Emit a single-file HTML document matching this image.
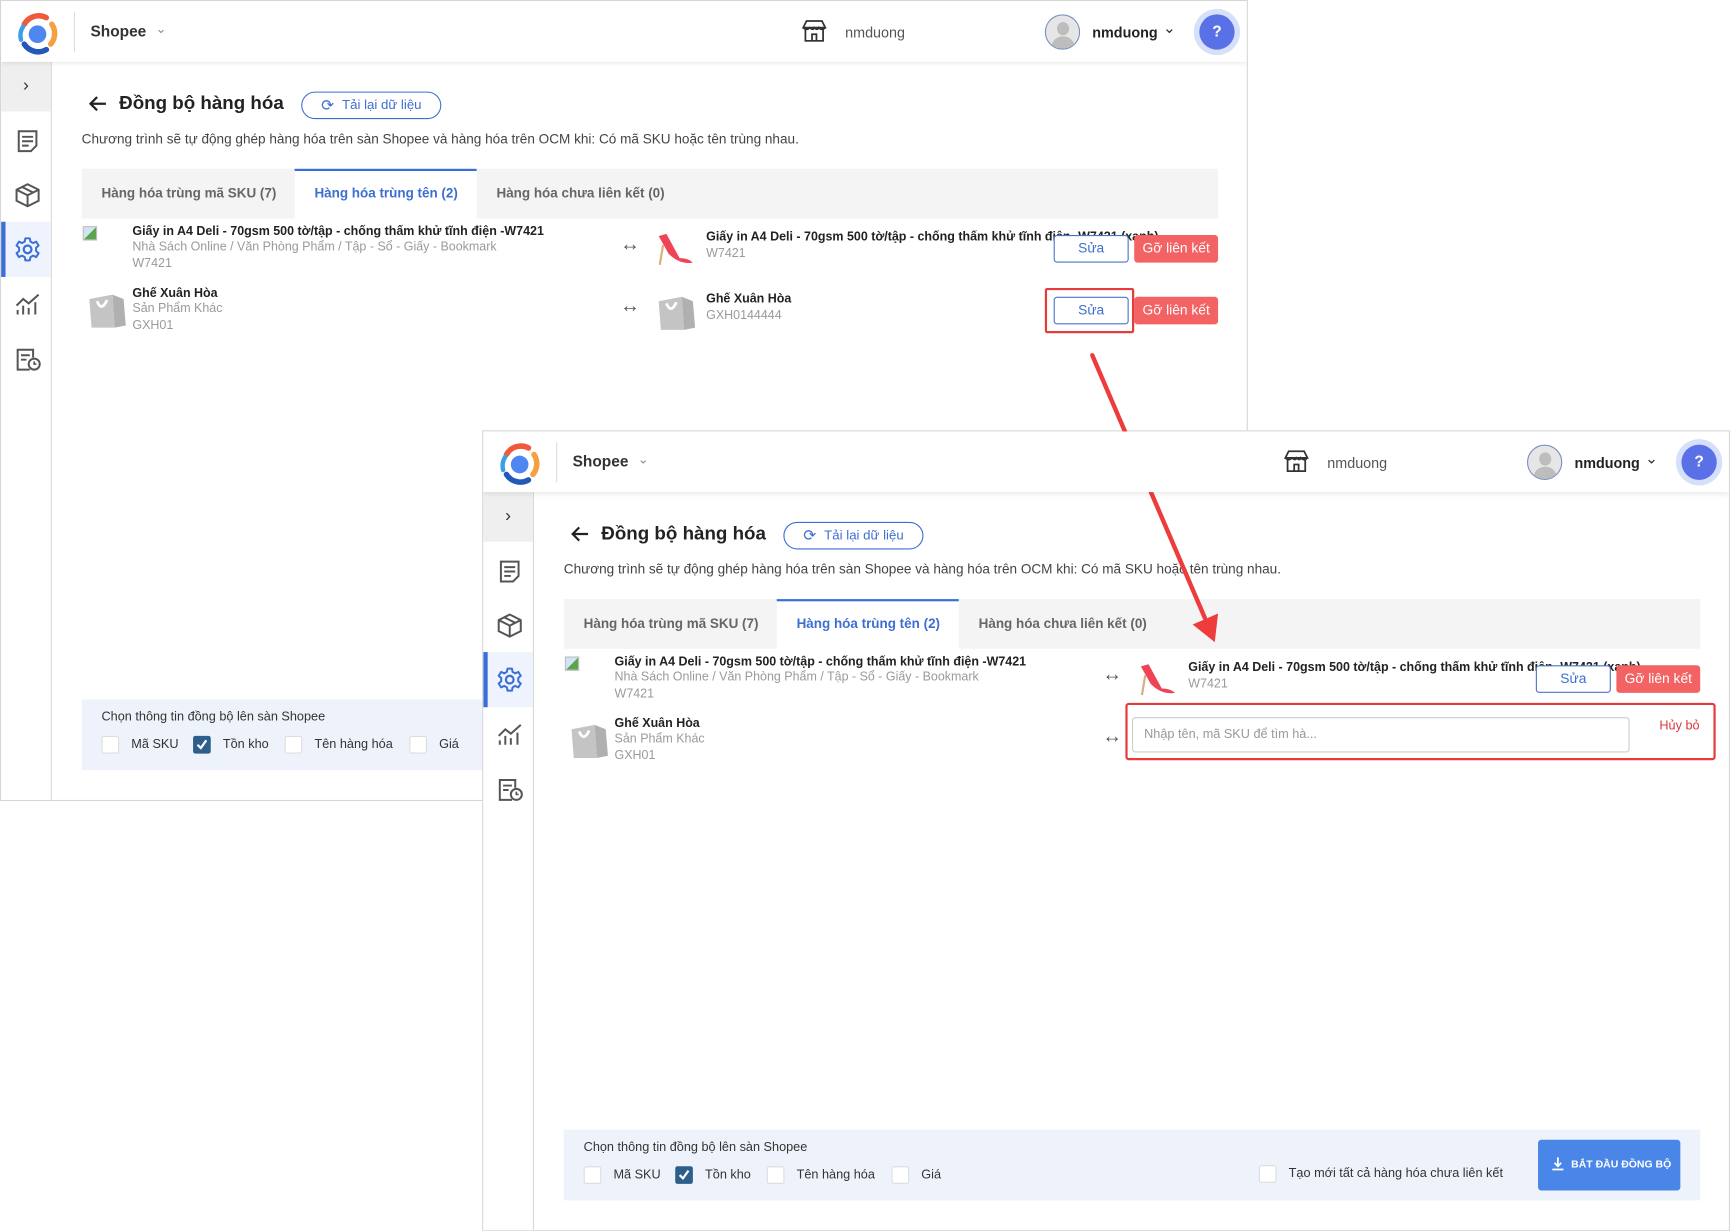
<!DOCTYPE html>
<html><head><meta charset="utf-8">
<style>
*{box-sizing:border-box;margin:0;padding:0}
html,body{width:1730px;height:1231px;overflow:hidden;background:#fff;font-family:"Liberation Sans",Arial,sans-serif;color:#333}
#sc{position:absolute;left:0;top:0;width:1568px;height:1116px;transform:scale(1.10332);transform-origin:0 0}
.win{position:absolute;width:1131px;height:726px;background:#fff;border:1px solid #d6d6d6;overflow:hidden}
.a{position:absolute;white-space:nowrap}
.hdr{position:absolute;left:0;top:0;width:100%;height:55px;background:#fff;box-shadow:0 2px 4px rgba(0,0,0,.08);z-index:2}
.side{position:absolute;left:0;top:55px;width:46px;bottom:0;background:#fff;border-right:1px solid #d8d8d8}
.b{font-weight:bold}
.t12{font-size:11.3px}
.g{color:#9a9a9a}
.btnS{position:absolute;width:68px;height:25px;border:1px solid #4a73c9;border-radius:3px;color:#3d6fd1;font-size:12.5px;text-align:center;line-height:23px;background:#fff}
.btnG{position:absolute;width:76px;height:25px;background:#f36363;border-radius:3px;color:#fff;font-size:12.5px;text-align:center;line-height:25px}
.cb{position:absolute;width:16px;height:16px;border:1px solid #ddd;background:#fff;border-radius:2px}
.cbc{background:#2d5f8a;border-color:#2d5f8a}
.bar{position:absolute;left:73px;top:633px;width:1030px;height:64px;background:#eef3fb}
.bar .l{font-size:11.5px}
.tabs{position:absolute;left:73px;top:152px;width:1030px;height:45px;background:#f4f4f4}
.tab{position:absolute;top:0;height:45px;line-height:45px;font-size:12.2px;font-weight:bold;color:#666}
</style></head><body><div id="sc">

<!-- WINDOW 1 -->
<div class="win" style="left:0;top:0;width:1131px;height:726px">
 <div class="hdr">
  <svg class="a" style="left:13px;top:9px" width="40" height="40" viewBox="0 0 40 40"><circle cx="20" cy="21" r="8" fill="#4f86f0"/><path d="M8 12 A15 15 0 0 1 28 6" stroke="#f05a3a" stroke-width="5" fill="none" stroke-linecap="round"/><path d="M33 12 A15 15 0 0 1 32 30" stroke="#f5a040" stroke-width="5" fill="none" stroke-linecap="round"/><path d="M28 35 A15 15 0 0 1 8 30" stroke="#2258b8" stroke-width="5" fill="none" stroke-linecap="round"/><path d="M5 26 A15 15 0 0 1 7 14" stroke="#3a9ee8" stroke-width="4" fill="none" stroke-linecap="round"/></svg>
  <div class="a" style="left:66px;top:10px;width:1px;height:36px;background:#ddd"></div>
  <div class="a b" style="left:81px;top:19px;font-size:14px;color:#333">Shopee</div>
  <div class="a" style="left:140px;top:18px;font-size:12px;color:#888">&#8964;</div>
  <svg class="a" style="left:725px;top:17px" width="24" height="20" viewBox="0 0 24 20"><path d="M2 7 L5 1 H19 L22 7 Z M2 7 Q5 10 8 7 Q11 10 12 7 Q15 10 16 7 Q19 10 22 7 M4 9 V19 H20 V9 M10 19 V13 H14 V19" stroke="#333" stroke-width="1.6" fill="none"/></svg>
  <div class="a" style="left:765px;top:21px;font-size:13px;color:#555">nmduong</div>
  <div class="a" style="left:946px;top:12px;width:32px;height:32px;border-radius:50%;border:1px solid #7a8fc0;background:#e6e6e6;overflow:hidden"><div style="position:absolute;left:10px;top:6px;width:11px;height:12px;border-radius:50%;background:#bdbdbd"></div><div style="position:absolute;left:5px;top:19px;width:21px;height:16px;border-radius:10px 10px 0 0;background:#bdbdbd"></div></div>
  <div class="a b" style="left:989px;top:21px;font-size:13px;color:#222">nmduong</div>
  <div class="a" style="left:1053px;top:16px;font-size:14px;color:#333">&#8964;</div>
  <div class="a" style="left:1081px;top:7px;width:42px;height:42px;border-radius:50%;background:#d6e0fa"><div style="position:absolute;left:5px;top:5px;width:32px;height:32px;border-radius:50%;background:#5a70e6;color:#fff;font-size:14px;font-weight:bold;text-align:center;line-height:30px">?</div></div>
 </div>
 <div class="side">
  <div class="a" style="left:0;top:0;width:45px;height:45px;background:#efefef;text-align:center;line-height:44px;font-size:16px;color:#333">&#8250;</div>
  <svg class="a" style="left:14px;top:61px" width="20" height="22" viewBox="0 0 20 22"><path d="M2 2 H18 V15 L13 20 H2 Z M5 7 H15 M5 11 H15 M5 15 H11" stroke="#555" stroke-width="1.8" fill="none"/></svg>
  <svg class="a" style="left:12px;top:109px" width="24" height="24" viewBox="0 0 24 24"><path d="M12 2 L22 7 V17 L12 22 L2 17 V7 Z M2 7 L12 12 L22 7 M12 12 V22 M7 4.5 L17 9.5" stroke="#555" stroke-width="1.8" fill="none"/></svg>
  <div class="a" style="left:0;top:145px;width:45px;height:50px;background:#eef3fd;border-left:4px solid #3a6fd8"></div>
  <svg class="a" style="left:12px;top:158px" width="24" height="24" viewBox="0 0 24 24"><circle cx="12" cy="12" r="3.5" stroke="#3a6fd8" stroke-width="2" fill="none"/><path d="M10 2 H14 L14.6 5 L17 6.3 L19.8 5 L22 8.5 L19.7 10.5 V13.5 L22 15.5 L19.8 19 L17 17.7 L14.6 19 L14 22 H10 L9.4 19 L7 17.7 L4.2 19 L2 15.5 L4.3 13.5 V10.5 L2 8.5 L4.2 5 L7 6.3 L9.4 5 Z" stroke="#3a6fd8" stroke-width="1.8" fill="none" stroke-linejoin="round"/></svg>
  <svg class="a" style="left:12px;top:209px" width="24" height="22" viewBox="0 0 24 22"><path d="M2 12 L8 6 L13 10 L22 2 M3 20 V16 M8 20 V12 M13 20 V14 M19 20 V9" stroke="#555" stroke-width="1.8" fill="none"/></svg>
  <svg class="a" style="left:13px;top:259px" width="24" height="22" viewBox="0 0 24 22"><path d="M13 20 H2 V2 H16 V9 M5 7 H13 M5 11 H10" stroke="#555" stroke-width="1.8" fill="none"/><circle cx="17" cy="15" r="5" stroke="#555" stroke-width="1.8" fill="none"/><path d="M17 12.5 V15 H19" stroke="#555" stroke-width="1.5" fill="none"/></svg>
 </div>
 <svg class="a" style="left:79px;top:85px" width="18" height="16" viewBox="0 0 18 16"><path d="M16 8 H2 M8 2 L2 8 L8 14" stroke="#222" stroke-width="2" fill="none"/></svg>
 <div class="a b" style="left:107px;top:83px;font-size:17px;color:#222">Đồng bộ hàng hóa</div>
 <div class="a" style="left:272px;top:82px;width:127px;height:25px;border:1px solid #3d6fd1;border-radius:13px;color:#3d6fd1;font-size:12px;line-height:23px;padding-left:36px">Tải lại dữ liệu</div>
 <div class="a" style="left:290px;top:86px;font-size:14px;color:#3d6fd1">&#10227;</div>
 <div class="a" style="left:73px;top:118px;font-size:12.3px;color:#444">Chương trình sẽ tự động ghép hàng hóa trên sàn Shopee và hàng hóa trên OCM khi: Có mã SKU hoặc tên trùng nhau.</div>
 <div class="tabs">
  <div class="tab" style="left:18px">Hàng hóa trùng mã SKU (7)</div>
  <div class="tab" style="left:193px;width:165px;background:#fff;border-top:2px solid #3a6fd8;line-height:41px;color:#3d6fd1;padding-left:18px">Hàng hóa trùng tên (2)</div>
  <div class="tab" style="left:376px">Hàng hóa chưa liên kết (0)</div>
 </div>
 <div class="a" style="left:74px;top:204px;width:13px;height:13px;border:1px solid #bbb;background:linear-gradient(135deg,#cfe4f5 50%,#5aa54a 50%)"></div>
 <div class="a b t12" style="left:119px;top:203px;color:#222">Giấy in A4 Deli - 70gsm 500 tờ/tập - chống thấm khử tĩnh điện -W7421</div>
 <div class="a t12 g" style="left:119px;top:217px">Nhà Sách Online / Văn Phòng Phẩm / Tập - Sổ - Giấy - Bookmark</div>
 <div class="a t12 g" style="left:119px;top:232px">W7421</div>
 <div class="a" style="left:561px;top:210px;font-size:18px;color:#555">&#8596;</div>
 <svg class="a" style="left:593px;top:209px" width="36" height="32" viewBox="0 0 36 32"><path d="M3 4 L12 20 Q22 30 34 28 Q30 24 22 24 L10 2 Z" fill="#ee4455"/><path d="M7 12 L4 30" stroke="#d8b080" stroke-width="2"/></svg>
 <div class="a b t12" style="left:639px;top:208px;color:#222">Giấy in A4 Deli - 70gsm 500 tờ/tập - chống thấm khử tĩnh điện -W7421 (xanh)</div>
 <div class="a t12 g" style="left:639px;top:223px">W7421</div>
 <div class="btnS" style="left:954px;top:212px">Sửa</div>
 <div class="btnG" style="left:1027px;top:212px">Gỡ liên kết</div>
 <svg class="a" style="left:79px;top:262px" width="35" height="36" viewBox="0 0 35 36"><path d="M1 8 L22 4 L24 34 L3 34 Z" fill="#c4c4c4"/><path d="M22 4 L32 8 L34 32 L24 34 Z" fill="#b0b0b0"/><path d="M8 10 Q12 20 17 9" stroke="#fff" stroke-width="2.5" fill="none"/></svg>
 <div class="a b t12" style="left:119px;top:259px;color:#222">Ghế Xuân Hòa</div>
 <div class="a t12 g" style="left:119px;top:273px">Sản Phẩm Khác</div>
 <div class="a t12 g" style="left:119px;top:288px">GXH01</div>
 <div class="a" style="left:561px;top:266px;font-size:18px;color:#555">&#8596;</div>
 <svg class="a" style="left:595px;top:264px" width="35" height="36" viewBox="0 0 35 36"><path d="M1 8 L22 4 L24 34 L3 34 Z" fill="#c4c4c4"/><path d="M22 4 L32 8 L34 32 L24 34 Z" fill="#b0b0b0"/><path d="M8 10 Q12 20 17 9" stroke="#fff" stroke-width="2.5" fill="none"/></svg>
 <div class="a b t12" style="left:639px;top:264px;color:#222">Ghế Xuân Hòa</div>
 <div class="a t12 g" style="left:639px;top:279px">GXH0144444</div>
 <div class="btnS" style="left:954px;top:268px">Sửa</div>
 <div class="btnG" style="left:1027px;top:268px">Gỡ liên kết</div>
 <div class="a" style="left:946px;top:260px;width:81px;height:41px;border:2px solid #e53b3b;border-radius:2px"></div>
 <div class="bar">
  <div class="a l" style="left:18px;top:10px;color:#333">Chọn thông tin đồng bộ lên sàn Shopee</div>
  <div class="cb" style="left:18px;top:33px"></div><div class="a l" style="left:45px;top:35px">Mã SKU</div>
  <div class="cb cbc" style="left:101px;top:33px"><svg width="14" height="14" viewBox="0 0 14 14"><path d="M3 7 L6 10 L11 3" stroke="#fff" stroke-width="2" fill="none"/></svg></div><div class="a l" style="left:128px;top:35px">Tồn kho</div>
  <div class="cb" style="left:184px;top:33px"></div><div class="a l" style="left:211px;top:35px">Tên hàng hóa</div>
  <div class="cb" style="left:297px;top:33px"></div><div class="a l" style="left:324px;top:35px">Giá</div>
 </div>
</div>

<!-- WINDOW 2 -->
<div class="win" style="left:437px;top:390px;width:1131px;height:726px">
 <div class="hdr">
  <svg class="a" style="left:13px;top:9px" width="40" height="40" viewBox="0 0 40 40"><circle cx="20" cy="21" r="8" fill="#4f86f0"/><path d="M8 12 A15 15 0 0 1 28 6" stroke="#f05a3a" stroke-width="5" fill="none" stroke-linecap="round"/><path d="M33 12 A15 15 0 0 1 32 30" stroke="#f5a040" stroke-width="5" fill="none" stroke-linecap="round"/><path d="M28 35 A15 15 0 0 1 8 30" stroke="#2258b8" stroke-width="5" fill="none" stroke-linecap="round"/><path d="M5 26 A15 15 0 0 1 7 14" stroke="#3a9ee8" stroke-width="4" fill="none" stroke-linecap="round"/></svg>
  <div class="a" style="left:66px;top:10px;width:1px;height:36px;background:#ddd"></div>
  <div class="a b" style="left:81px;top:19px;font-size:14px;color:#333">Shopee</div>
  <div class="a" style="left:140px;top:18px;font-size:12px;color:#888">&#8964;</div>
  <svg class="a" style="left:725px;top:17px" width="24" height="20" viewBox="0 0 24 20"><path d="M2 7 L5 1 H19 L22 7 Z M2 7 Q5 10 8 7 Q11 10 12 7 Q15 10 16 7 Q19 10 22 7 M4 9 V19 H20 V9 M10 19 V13 H14 V19" stroke="#333" stroke-width="1.6" fill="none"/></svg>
  <div class="a" style="left:765px;top:21px;font-size:13px;color:#555">nmduong</div>
  <div class="a" style="left:946px;top:12px;width:32px;height:32px;border-radius:50%;border:1px solid #7a8fc0;background:#e6e6e6;overflow:hidden"><div style="position:absolute;left:10px;top:6px;width:11px;height:12px;border-radius:50%;background:#bdbdbd"></div><div style="position:absolute;left:5px;top:19px;width:21px;height:16px;border-radius:10px 10px 0 0;background:#bdbdbd"></div></div>
  <div class="a b" style="left:989px;top:21px;font-size:13px;color:#222">nmduong</div>
  <div class="a" style="left:1053px;top:16px;font-size:14px;color:#333">&#8964;</div>
  <div class="a" style="left:1081px;top:7px;width:42px;height:42px;border-radius:50%;background:#d6e0fa"><div style="position:absolute;left:5px;top:5px;width:32px;height:32px;border-radius:50%;background:#5a70e6;color:#fff;font-size:14px;font-weight:bold;text-align:center;line-height:30px">?</div></div>
 </div>
 <div class="side">
  <div class="a" style="left:0;top:0;width:45px;height:45px;background:#efefef;text-align:center;line-height:44px;font-size:16px;color:#333">&#8250;</div>
  <svg class="a" style="left:14px;top:61px" width="20" height="22" viewBox="0 0 20 22"><path d="M2 2 H18 V15 L13 20 H2 Z M5 7 H15 M5 11 H15 M5 15 H11" stroke="#555" stroke-width="1.8" fill="none"/></svg>
  <svg class="a" style="left:12px;top:109px" width="24" height="24" viewBox="0 0 24 24"><path d="M12 2 L22 7 V17 L12 22 L2 17 V7 Z M2 7 L12 12 L22 7 M12 12 V22 M7 4.5 L17 9.5" stroke="#555" stroke-width="1.8" fill="none"/></svg>
  <div class="a" style="left:0;top:145px;width:45px;height:50px;background:#eef3fd;border-left:4px solid #3a6fd8"></div>
  <svg class="a" style="left:12px;top:158px" width="24" height="24" viewBox="0 0 24 24"><circle cx="12" cy="12" r="3.5" stroke="#3a6fd8" stroke-width="2" fill="none"/><path d="M10 2 H14 L14.6 5 L17 6.3 L19.8 5 L22 8.5 L19.7 10.5 V13.5 L22 15.5 L19.8 19 L17 17.7 L14.6 19 L14 22 H10 L9.4 19 L7 17.7 L4.2 19 L2 15.5 L4.3 13.5 V10.5 L2 8.5 L4.2 5 L7 6.3 L9.4 5 Z" stroke="#3a6fd8" stroke-width="1.8" fill="none" stroke-linejoin="round"/></svg>
  <svg class="a" style="left:12px;top:209px" width="24" height="22" viewBox="0 0 24 22"><path d="M2 12 L8 6 L13 10 L22 2 M3 20 V16 M8 20 V12 M13 20 V14 M19 20 V9" stroke="#555" stroke-width="1.8" fill="none"/></svg>
  <svg class="a" style="left:13px;top:259px" width="24" height="22" viewBox="0 0 24 22"><path d="M13 20 H2 V2 H16 V9 M5 7 H13 M5 11 H10" stroke="#555" stroke-width="1.8" fill="none"/><circle cx="17" cy="15" r="5" stroke="#555" stroke-width="1.8" fill="none"/><path d="M17 12.5 V15 H19" stroke="#555" stroke-width="1.5" fill="none"/></svg>
 </div>
 <svg class="a" style="left:79px;top:85px" width="18" height="16" viewBox="0 0 18 16"><path d="M16 8 H2 M8 2 L2 8 L8 14" stroke="#222" stroke-width="2" fill="none"/></svg>
 <div class="a b" style="left:107px;top:83px;font-size:17px;color:#222">Đồng bộ hàng hóa</div>
 <div class="a" style="left:272px;top:82px;width:127px;height:25px;border:1px solid #3d6fd1;border-radius:13px;color:#3d6fd1;font-size:12px;line-height:23px;padding-left:36px">Tải lại dữ liệu</div>
 <div class="a" style="left:290px;top:86px;font-size:14px;color:#3d6fd1">&#10227;</div>
 <div class="a" style="left:73px;top:118px;font-size:12.3px;color:#444">Chương trình sẽ tự động ghép hàng hóa trên sàn Shopee và hàng hóa trên OCM khi: Có mã SKU hoặc tên trùng nhau.</div>
 <div class="tabs">
  <div class="tab" style="left:18px">Hàng hóa trùng mã SKU (7)</div>
  <div class="tab" style="left:193px;width:165px;background:#fff;border-top:2px solid #3a6fd8;line-height:41px;color:#3d6fd1;padding-left:18px">Hàng hóa trùng tên (2)</div>
  <div class="tab" style="left:376px">Hàng hóa chưa liên kết (0)</div>
 </div>
 <div class="a" style="left:74px;top:204px;width:13px;height:13px;border:1px solid #bbb;background:linear-gradient(135deg,#cfe4f5 50%,#5aa54a 50%)"></div>
 <div class="a b t12" style="left:119px;top:203px;color:#222">Giấy in A4 Deli - 70gsm 500 tờ/tập - chống thấm khử tĩnh điện -W7421</div>
 <div class="a t12 g" style="left:119px;top:217px">Nhà Sách Online / Văn Phòng Phẩm / Tập - Sổ - Giấy - Bookmark</div>
 <div class="a t12 g" style="left:119px;top:232px">W7421</div>
 <div class="a" style="left:561px;top:210px;font-size:18px;color:#555">&#8596;</div>
 <svg class="a" style="left:593px;top:209px" width="36" height="32" viewBox="0 0 36 32"><path d="M3 4 L12 20 Q22 30 34 28 Q30 24 22 24 L10 2 Z" fill="#ee4455"/><path d="M7 12 L4 30" stroke="#d8b080" stroke-width="2"/></svg>
 <div class="a b t12" style="left:639px;top:208px;color:#222">Giấy in A4 Deli - 70gsm 500 tờ/tập - chống thấm khử tĩnh điện -W7421 (xanh)</div>
 <div class="a t12 g" style="left:639px;top:223px">W7421</div>
 <div class="btnS" style="left:954px;top:212px">Sửa</div>
 <div class="btnG" style="left:1027px;top:212px">Gỡ liên kết</div>
 <svg class="a" style="left:79px;top:262px" width="35" height="36" viewBox="0 0 35 36"><path d="M1 8 L22 4 L24 34 L3 34 Z" fill="#c4c4c4"/><path d="M22 4 L32 8 L34 32 L24 34 Z" fill="#b0b0b0"/><path d="M8 10 Q12 20 17 9" stroke="#fff" stroke-width="2.5" fill="none"/></svg>
 <div class="a b t12" style="left:119px;top:259px;color:#222">Ghế Xuân Hòa</div>
 <div class="a t12 g" style="left:119px;top:273px">Sản Phẩm Khác</div>
 <div class="a t12 g" style="left:119px;top:288px">GXH01</div>
 <div class="a" style="left:561px;top:266px;font-size:18px;color:#555">&#8596;</div>
 <div class="a" style="left:588px;top:259px;width:451px;height:32px;border:1px solid #ccc;border-radius:3px;font-size:11.5px;color:#999;line-height:30px;padding-left:10px">Nhập tên, mã SKU để tìm hà...</div>
 <div class="a" style="left:1066px;top:261px;font-size:11.5px;color:#d9363e">Hủy bỏ</div>
 <div class="a" style="left:582px;top:246px;width:535px;height:52px;border:2px solid #e53b3b;border-radius:3px"></div>
 <div class="bar">
  <div class="a l" style="left:18px;top:10px;color:#333">Chọn thông tin đồng bộ lên sàn Shopee</div>
  <div class="cb" style="left:18px;top:33px"></div><div class="a l" style="left:45px;top:35px">Mã SKU</div>
  <div class="cb cbc" style="left:101px;top:33px"><svg width="14" height="14" viewBox="0 0 14 14"><path d="M3 7 L6 10 L11 3" stroke="#fff" stroke-width="2" fill="none"/></svg></div><div class="a l" style="left:128px;top:35px">Tồn kho</div>
  <div class="cb" style="left:184px;top:33px"></div><div class="a l" style="left:211px;top:35px">Tên hàng hóa</div>
  <div class="cb" style="left:297px;top:33px"></div><div class="a l" style="left:324px;top:35px">Giá</div>
  <div class="cb" style="left:630px;top:32px"></div><div class="a l" style="left:657px;top:34px">Tạo mới tất cả hàng hóa chưa liên kết</div>
  <div class="a" style="left:883px;top:9px;width:129px;height:46px;background:#4a86e8;border-radius:3px;color:#fff;font-size:9.5px;font-weight:bold;line-height:46px;padding-left:30px">BẮT ĐẦU ĐỒNG BỘ</div>
  <svg class="a" style="left:895px;top:24px" width="12" height="14" viewBox="0 0 12 14"><path d="M6 1 V9 M3 6 L6 9 L9 6 M1 12 H11" stroke="#fff" stroke-width="1.6" fill="none"/></svg>
 </div>
</div>

<!-- red arrow -->
<svg class="a" style="left:0;top:0" width="1568" height="1116" viewBox="0 0 1568 1116">
 <line x1="990" y1="322" x2="1092" y2="560" stroke="#ee3b3b" stroke-width="4" stroke-linecap="round"/>
 <path d="M1081 566 L1101 582 L1104 556 Z" fill="#ee3b3b"/>
</svg>
</div></body></html>
